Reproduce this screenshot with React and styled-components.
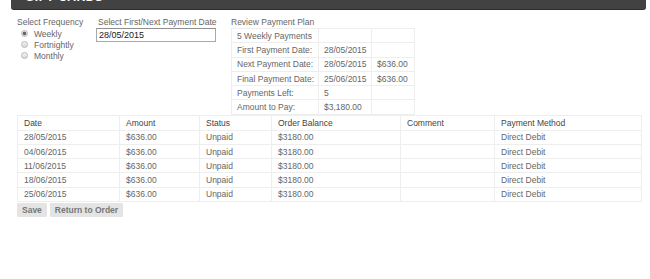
import React from 'react'
import styled, { createGlobalStyle } from 'styled-components'

const GlobalStyle = createGlobalStyle`
  body {
    margin: 0;
    background: #fff;
    font-family: "Liberation Sans", Arial, sans-serif;
    font-size: 8.5px;
    color: #666;
  }
`

const rows = [
  { date: '28/05/2015' },
  { date: '04/06/2015' },
  { date: '11/06/2015' },
  { date: '18/06/2015' },
  { date: '25/06/2015' }
]

const plan = [
  ['5 Weekly Payments', '', ''],
  ['First Payment Date:', '28/05/2015', ''],
  ['Next Payment Date:', '28/05/2015', '$636.00'],
  ['Final Payment Date:', '25/06/2015', '$636.00'],
  ['Payments Left:', '5', ''],
  ['Amount to Pay:', '$3,180.00', '']
]

const frequencies = ['Weekly', 'Fortnightly', 'Monthly']

const App = () => (
  <Page>
    <GlobalStyle />
    <TitleBar>
      <Title>GIFT CARDS</Title>
    </TitleBar>
    <Content>
      <Options>
        <FrequencyCol>
          <Label>Select Frequency</Label>
          {frequencies.map((f, i) => (
            <RadioRow key={f}>
              <Radio checked={i === 0} />
              {f}
            </RadioRow>
          ))}
        </FrequencyCol>
        <DateCol>
          <Label>Select First/Next Payment Date</Label>
          <DateInput defaultValue="28/05/2015" />
        </DateCol>
        <ReviewCol>
          <Label>Review Payment Plan</Label>
          <PlanTable>
            <colgroup>
              <col style={{ width: 87 }} />
              <col style={{ width: 53 }} />
              <col style={{ width: 43 }} />
            </colgroup>
            <tbody>
              {plan.map((r, i) => (
                <tr key={i}>
                  {r.map((c, j) => (
                    <PlanCell key={j}>{c}</PlanCell>
                  ))}
                </tr>
              ))}
            </tbody>
          </PlanTable>
        </ReviewCol>
      </Options>
      <Schedule>
        <colgroup>
          <col style={{ width: 102 }} />
          <col style={{ width: 80 }} />
          <col style={{ width: 72 }} />
          <col style={{ width: 129 }} />
          <col style={{ width: 94 }} />
          <col style={{ width: 147 }} />
        </colgroup>
        <thead>
          <tr>
            <Head>Date</Head>
            <Head>Amount</Head>
            <Head>Status</Head>
            <Head>Order Balance</Head>
            <Head>Comment</Head>
            <Head>Payment Method</Head>
          </tr>
        </thead>
        <tbody>
          {rows.map(r => (
            <tr key={r.date}>
              <Cell>{r.date}</Cell>
              <Cell>$636.00</Cell>
              <Cell>Unpaid</Cell>
              <Cell>$3180.00</Cell>
              <Cell></Cell>
              <Cell>Direct Debit</Cell>
            </tr>
          ))}
        </tbody>
      </Schedule>
      <Actions>
        <Button>Save</Button>
        <Button>Return to Order</Button>
      </Actions>
    </Content>
  </Page>
)

export default App

const Page = styled.div`
  width: 650px;
  height: 279px;
  overflow: hidden;
`

const TitleBar = styled.div`
  margin: 0 4px 0 11px;
  height: 9px;
  background: #424242;
  border-bottom: 1px solid #2e2e2e;
  border-radius: 0 0 3px 3px;
  overflow: hidden;
  padding-left: 14px;
`

const Title = styled.div`
  color: #fff;
  font-weight: bold;
  font-size: 12px;
  line-height: 12px;
  margin-top: -9px;
  letter-spacing: 0.5px;
`

const Content = styled.div`
  padding: 7px 0 0 17px;
`

const Options = styled.div`
  display: flex;
  align-items: flex-start;
`

const Label = styled.div`
  line-height: 10px;
  color: #666;
  margin-bottom: 1px;
`

const FrequencyCol = styled.div`
  width: 81px;
`

const RadioRow = styled.div`
  display: flex;
  align-items: center;
  height: 11px;
  padding-left: 4px;
  gap: 6px;
`

const Radio = styled.span`
  width: 7px;
  height: 7px;
  border-radius: 50%;
  border: 1px solid #b8b8b8;
  background: ${p =>
    p.checked
      ? 'radial-gradient(circle, #666 0 1.4px, #e8e8e8 2.2px)'
      : 'linear-gradient(#f4f4f4, #d8d8d8)'};
  box-sizing: border-box;
`

const DateCol = styled.div`
  width: 132px;
  margin-left: -2px;
  padding-left: 2px;
`

const DateInput = styled.input`
  display: block;
  box-sizing: border-box;
  width: 120px;
  height: 14px;
  margin: 0 0 0 -2px;
  padding: 0 2px;
  border: 1px solid #a9a9a9;
  border-top-color: #8f8f8f;
  font-family: "Liberation Sans", Arial, sans-serif;
  font-size: 9px;
  color: #222;
  outline: 0;
`

const ReviewCol = styled.div`
  margin-left: 1px;
`

const PlanTable = styled.table`
  border-collapse: collapse;
  table-layout: fixed;
  width: 183px;
`

const PlanCell = styled.td`
  height: 14.3px;
  padding: 0 5px;
  border: 1px solid #eee;
  white-space: nowrap;
  line-height: 12px;
  box-sizing: border-box;
`

const Schedule = styled.table`
  border-collapse: collapse;
  table-layout: fixed;
  width: 624px;
`

const Head = styled.th`
  text-align: left;
  font-weight: normal;
  color: #444;
  height: 15px;
  padding: 0 6px;
  border: 1px solid #eee;
  box-sizing: border-box;
`

const Cell = styled.td`
  height: 14.2px;
  padding: 0 6px;
  border: 1px solid #eee;
  box-sizing: border-box;
  white-space: nowrap;
  line-height: 12px;
`

const Actions = styled.div`
  display: flex;
  gap: 3px;
  margin-top: 1px;
`

const Button = styled.button`
  height: 14px;
  padding: 0 5px;
  border: 0;
  border-radius: 1px;
  background: #e4e4e4;
  color: #777;
  font-family: "Liberation Sans", Arial, sans-serif;
  font-size: 8.5px;
  font-weight: bold;
  line-height: 14px;
  cursor: pointer;
`
